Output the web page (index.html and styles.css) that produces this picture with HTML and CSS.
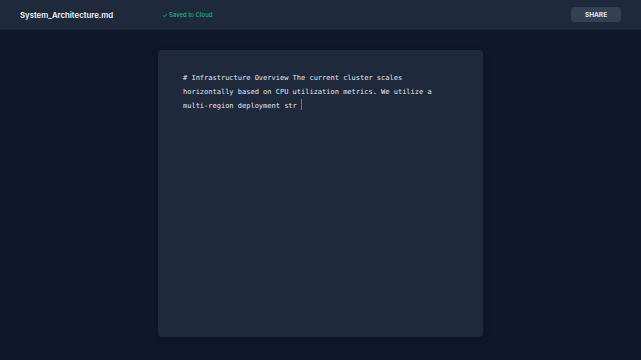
FILE: index.html
```html
<!DOCTYPE html>
<html>
<head>
<meta charset="utf-8">
<link rel="stylesheet" href="styles.css">
</head>
<body>
<header class="topbar">
  <div class="left">
    <span class="title">System_Architecture.md</span>
    <span class="status">✓ Saved to Cloud</span>
  </div>
  <button class="share">SHARE</button>
</header>
<main class="workspace">
  <section class="editor">
    <p class="content"># Infrastructure Overview The current cluster scales horizontally based on CPU utilization metrics. We utilize a multi-region deployment str <span class="caret"></span></p>
  </section>
</main>
</body>
</html>
```
FILE: styles.css
```css
* { box-sizing: border-box; }
html, body { margin: 0; padding: 0; }
body {
  width: 641px;
  height: 360px;
  background: #0f172a;
  font-family: Inter, "Noto Sans", sans-serif;
  display: flex;
  flex-direction: column;
  overflow: hidden;
}
.topbar {
  height: 30px;
  flex: none;
  background: #1e293b;
  border-bottom: 1px solid #1a2436;
  display: flex;
  align-items: center;
  justify-content: space-between;
  padding: 0 20px;
}
.left {
  display: flex;
  align-items: center;
  gap: 49px;
}
.title {
  color: #f1f5f9;
  font-size: 7.8px;
  font-weight: 600;
}
.status {
  color: #10b981;
  font-size: 6px;
  font-weight: 500;
}
.share {
  width: 50px;
  height: 15px;
  background: #334155;
  border: none;
  border-radius: 4px;
  color: #e2e8f0;
  font-family: Inter, sans-serif;
  font-size: 6.5px;
  font-weight: 700;
  padding: 0;
}
.workspace {
  flex: 1;
  display: flex;
  justify-content: center;
  padding: 20px 0 23px;
}
.editor {
  width: 325px;
  background: #1e293b;
  border-radius: 4px;
  box-shadow: 0 2px 6px rgba(0,0,0,0.3);
  padding: 22px 25px;
}
.content {
  margin: 0;
  max-width: 262px;
  font-family: "DejaVu Sans Mono", monospace;
  font-size: 7px;
  line-height: 13.5px;
  color: #e2e8f0;
}
.caret {
  display: inline-block;
  width: 1px;
  height: 11px;
  background: #6366f1;
  vertical-align: -2px;
}
```
